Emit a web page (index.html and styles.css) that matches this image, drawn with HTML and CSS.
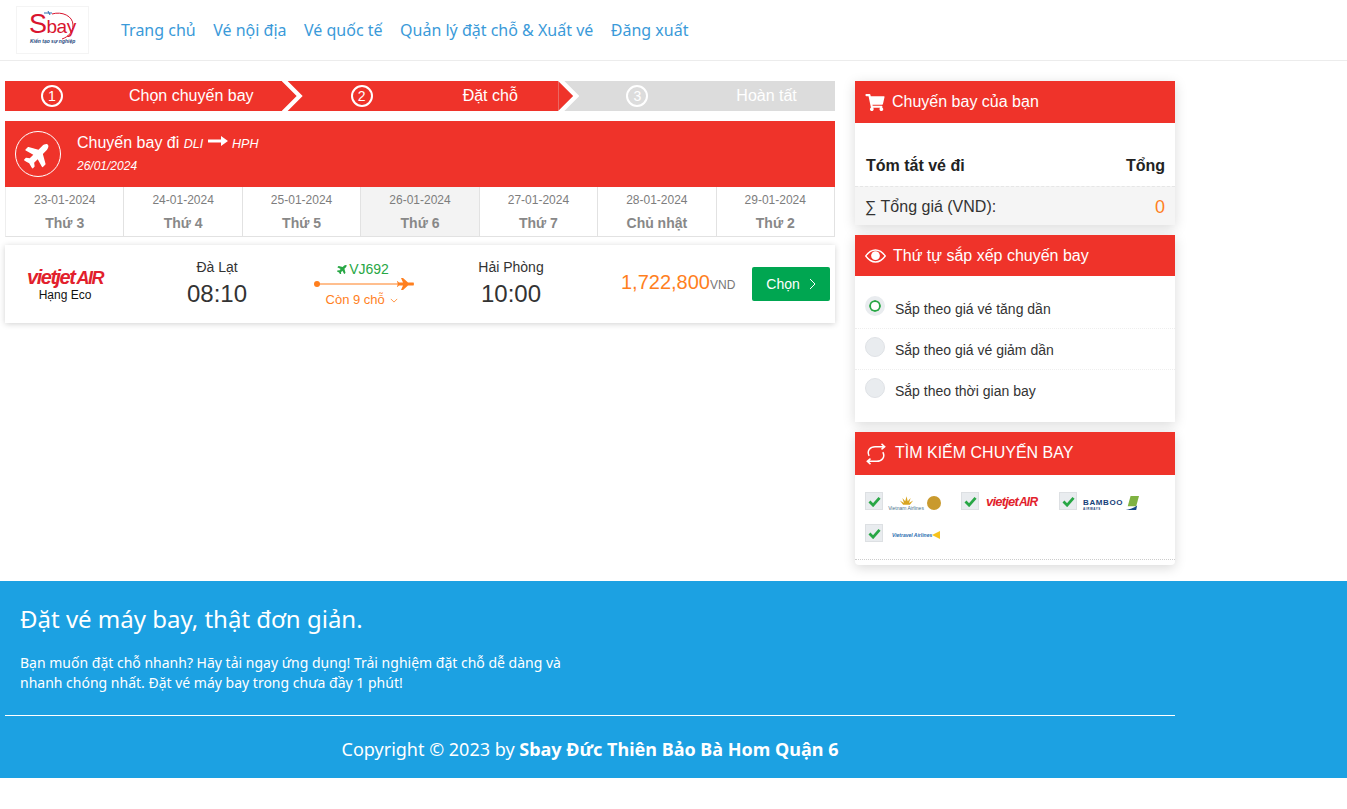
FILE: index.html
```html
<!DOCTYPE html>
<html lang="vi">
<head>
  <meta charset="UTF-8">
  <meta name="viewport" content="width=device-width, initial-scale=1.0">
  <title>Sbay - Đặt vé máy bay</title>
  <link rel="stylesheet" href="styles.css">
</head>
<body>
  <!-- Thanh menu -->
  <header class="topbar">
    <a class="logo" href="#">
      <span class="logo-word"><span class="logo-s">S</span>bay</span>
      <svg class="logo-arc" viewBox="0 0 36 30"><path d="M14 4 C24 1 35 6 35 15 C35 22 30 27 24 29" fill="none" stroke="#d9152f" stroke-width="1"/><path d="M6 3h8M10 1l2 4" stroke="#2a6db0" stroke-width="1" fill="none"/></svg>
      <span class="logo-slogan">Kiến tạo sự nghiệp</span>
    </a>
    <nav class="menu">
      <a href="#">Trang chủ</a>
      <a href="#">Vé nội địa</a>
      <a href="#">Vé quốc tế</a>
      <a href="#">Quản lý đặt chỗ &amp; Xuất vé</a>
      <a href="#">Đăng xuất</a>
    </nav>
  </header>

  <main class="content">
    <section class="col-left">
      <!-- Các bước -->
      <div class="steps">
        <div class="step step-one"><span class="step-num">1</span><span class="step-text">Chọn chuyến bay</span></div>
        <div class="step step-two"><span class="step-num">2</span><span class="step-text">Đặt chỗ</span></div>
        <div class="step step-three"><span class="step-num">3</span><span class="step-text">Hoàn tất</span></div>
      </div>

      <div class="route-bar">
        <span class="route-icon">
          <svg class="icon-plane" viewBox="0 0 576 512"><path fill="#fff" d="M480 192H365.71L260.61 8.06A16.014 16.014 0 0 0 246.71 0h-65.5c-10.63 0-18.3 10.17-15.38 20.39L214.86 192H112l-43.2-57.6c-3.02-4.03-7.77-6.4-12.8-6.4H16.01C5.6 128-2.04 137.78.49 147.88L32 256 .49 364.12C-2.04 374.22 5.6 384 16.01 384H56c5.04 0 9.78-2.37 12.8-6.4L112 320h102.86l-49.03 171.6c-2.92 10.22 4.75 20.4 15.38 20.4h65.5c5.74 0 11.04-3.08 13.89-8.06L365.71 320H480c35.35 0 96-28.65 96-64s-60.65-64-96-64z"/></svg>
        </span>
        <div class="route-info">
          <div class="route-title">Chuyến bay đi <em>DLI</em>
            <svg class="icon-arrow" viewBox="0 0 20 10"><path fill="#fff" d="M0 3.6h13V0l7 5-7 5V6.4H0z"/></svg>
            <em>HPH</em></div>
          <div class="route-date">26/01/2024</div>
        </div>
      </div>

      <!-- Chọn ngày -->
      <div class="dates">
        <div class="date-cell"><span class="date-day">23-01-2024</span><b>Thứ 3</b></div>
        <div class="date-cell"><span class="date-day">24-01-2024</span><b>Thứ 4</b></div>
        <div class="date-cell"><span class="date-day">25-01-2024</span><b>Thứ 5</b></div>
        <div class="date-cell active"><span class="date-day">26-01-2024</span><b>Thứ 6</b></div>
        <div class="date-cell"><span class="date-day">27-01-2024</span><b>Thứ 7</b></div>
        <div class="date-cell"><span class="date-day">28-01-2024</span><b>Chủ nhật</b></div>
        <div class="date-cell"><span class="date-day">29-01-2024</span><b>Thứ 2</b></div>
      </div>

      <!-- Chuyến bay -->
      <div class="flight">
        <div class="flight-airline">
          <span class="vj-logo">vietjet<i>AIR</i></span>
          <span class="flight-class">Hạng Eco</span>
        </div>
        <div class="flight-point"><span class="city">Đà Lạt</span><span class="time">08:10</span></div>
        <div class="flight-mid">
          <span class="flight-no">
            <svg class="icon-mini" viewBox="0 0 576 512"><path fill="#28a745" transform="rotate(-45 288 256)" d="M480 192H365.71L260.61 8.06A16.014 16.014 0 0 0 246.71 0h-65.5c-10.63 0-18.3 10.17-15.38 20.39L214.86 192H112l-43.2-57.6c-3.02-4.03-7.77-6.4-12.8-6.4H16.01C5.6 128-2.04 137.78.49 147.88L32 256 .49 364.12C-2.04 374.22 5.6 384 16.01 384H56c5.04 0 9.78-2.37 12.8-6.4L112 320h102.86l-49.03 171.6c-2.92 10.22 4.75 20.4 15.38 20.4h65.5c5.74 0 11.04-3.08 13.89-8.06L365.71 320H480c35.35 0 96-28.65 96-64s-60.65-64-96-64z"/></svg>VJ692</span>
          <svg class="flight-line" viewBox="0 0 100 12"><circle cx="3" cy="6" r="3" fill="#ff7f1e"/><path d="M3 6h96" stroke="#ff7f1e" stroke-width="1"/><path fill="#ff7f1e" d="M87 0h2l5 4.6h5.6L100 6l-.4 1.4H94L89 12h-2l2-4.6h-4l-1.600 1.600H83l.8-3-.8-3h.4L85 4.600h4z"/></svg>
          <span class="seats">Còn 9 chỗ
            <svg class="icon-down" viewBox="0 0 10 6"><path d="M1 1l4 4 4-4" fill="none" stroke="#ff7f1e" stroke-width="1"/></svg></span>
        </div>
        <div class="flight-point"><span class="city">Hải Phòng</span><span class="time">10:00</span></div>
        <div class="flight-price">1,722,800<small>VND</small></div>
        <a class="btn-choose" href="#">Chọn
          <svg class="icon-right" viewBox="0 0 7 12"><path d="M1 1l5 5-5 5" fill="none" stroke="#fff" stroke-width="1"/></svg></a>
      </div>
    </section>

    <aside class="col-right">
      <div class="panel">
        <div class="panel-head head-cart">
          <svg class="icon-cart" viewBox="0 0 576 512"><path fill="#fff" d="M528.12 301.319l47.273-208C578.806 78.301 567.391 64 551.99 64H159.208l-9.166-44.81C147.758 8.021 137.93 0 126.529 0H24C10.745 0 0 10.745 0 24v16c0 13.255 10.745 24 24 24h69.883l70.248 343.435C147.325 417.1 136 435.222 136 456c0 30.928 25.072 56 56 56s56-25.072 56-56c0-15.674-6.447-29.835-16.824-40h209.647C430.447 426.165 424 440.326 424 456c0 30.928 25.072 56 56 56s56-25.072 56-56c0-22.172-12.888-41.332-31.579-50.405l5.517-24.276c3.413-15.018-8.002-29.319-23.403-29.319H218.117l-6.545-32h293.145c11.206 0 20.92-7.754 23.403-18.681z"/></svg>
          Chuyến bay của bạn
        </div>
        <div class="summary-head"><span>Tóm tắt vé đi</span><span>Tổng</span></div>
        <div class="summary-total"><span>∑ Tổng giá (VND):</span><span class="total-num">0</span></div>
      </div>

      <div class="panel">
        <div class="panel-head">
          <svg class="icon-eye" viewBox="0 0 28 18"><path d="M1 9C5 3.500 9 1 14 1s9 2.500 13 8c-4 5.500-8 8-13 8S5 14.500 1 9z" fill="none" stroke="#fff" stroke-width="1.800"/><circle cx="14" cy="8.500" r="5.800" fill="#fff"/></svg>
          Thứ tự sắp xếp chuyến bay
        </div>
        <div class="sort-list">
          <div class="sort-item"><span class="radio checked"></span>Sắp theo giá vé tăng dần</div>
          <div class="sort-item"><span class="radio"></span>Sắp theo giá vé giảm dần</div>
          <div class="sort-item"><span class="radio"></span>Sắp theo thời gian bay</div>
        </div>
      </div>

      <div class="panel panel-search">
        <div class="panel-head head-search">
          <svg class="icon-refresh" viewBox="0 0 24 24"><path d="M4.500 14C1.500 8 6 4 11 4h10M18 1l3.500 3-3.500 3M19.500 10c3 6-1.500 10-6.500 10H3M6 17l-3.500 3L6 23" fill="none" stroke="#fff" stroke-width="1.600"/></svg>
          TÌM KIẾM CHUYẾN BAY
        </div>
        <div class="airlines">
          <label class="airline al-vn">
            <span class="check"><svg viewBox="0 0 14 12"><path d="M1.500 6l4 4 7-8" fill="none" stroke="#28a745" stroke-width="3"/></svg></span>
            <span class="vn-logo"><svg viewBox="0 0 18 10"><path fill="#d9a521" d="M9 0l1.500 6L14 2l-2 6 5-3-4 5H5L1 5l5 3-2-6 3.500 4z"/></svg><small>Vietnam Airlines</small></span>
            <span class="vn-badge"></span>
          </label>
          <label class="airline al-vj">
            <span class="check"><svg viewBox="0 0 14 12"><path d="M1.500 6l4 4 7-8" fill="none" stroke="#28a745" stroke-width="3"/></svg></span>
            <span class="vj-logo vj-small">vietjet<i>AIR</i></span>
          </label>
          <label class="airline al-bb">
            <span class="check"><svg viewBox="0 0 14 12"><path d="M1.500 6l4 4 7-8" fill="none" stroke="#28a745" stroke-width="3"/></svg></span>
            <span class="bb-logo">BAMBOO<small>AIRWAYS</small></span>
            <svg class="bb-tail" viewBox="0 0 18 16"><path fill="#7fb241" d="M8 0h9l-3 11H5z"/><path fill="#164a86" d="M0 15c6 0 11-2 15-5l-1 5z"/></svg>
          </label>
          <label class="airline al-vs">
            <span class="check"><svg viewBox="0 0 14 12"><path d="M1.500 6l4 4 7-8" fill="none" stroke="#28a745" stroke-width="3"/></svg></span>
            <span class="vs-logo">Vietravel Airlines</span>
            <svg class="vs-tail" viewBox="0 0 8 8"><path fill="#f7c31c" d="M8 0v8L0 4z"/></svg>
          </label>
        </div>
      </div>
    </aside>
  </main>

  <footer class="footer">
    <h2>Đặt vé máy bay, thật đơn giản.</h2>
    <p>Bạn muốn đặt chỗ nhanh? Hãy tải ngay ứng dụng! Trải nghiệm đặt chỗ dễ dàng và nhanh chóng nhất. Đặt vé máy bay trong chưa đầy 1 phút!</p>
    <div class="copyright">Copyright © 2023 by <b>Sbay Đức Thiên Bảo Bà Hom Quận 6</b></div>
  </footer>
</body>
</html>
```

FILE: styles.css
```css
/* Cơ bản */
body {
  margin: 0;
  font-family: "Liberation Sans", Arial, sans-serif;
  color: #333;
  background-color: #fff;
}
a {
  text-decoration: none;
}

/* Thanh menu */
.topbar {
  display: flex;
  align-items: center;
  height: 60px;
  padding-left: 16px;
  border-bottom: 1px solid #ececec;
}
.logo {
  position: relative;
  display: block;
  box-sizing: border-box;
  width: 73px;
  height: 48px;
  border: 1px solid #f4f4f4;
}
.logo-word {
  position: absolute;
  left: 12px;
  top: 3px;
  font-size: 19px;
  letter-spacing: -0.5px;
  line-height: 28px;
  color: #d9152f;
}
.logo-s {
  font-size: 27px;
}
.logo-arc {
  position: absolute;
  left: 21px;
  top: 3px;
  width: 36px;
  height: 30px;
}
.logo-slogan {
  position: absolute;
  left: 13px;
  top: 31px;
  font-size: 5px;
  line-height: 7px;
  font-style: italic;
  font-weight: bold;
  color: #25477d;
  white-space: nowrap;
}
.menu {
  display: flex;
  gap: 17.500px;
  margin-left: 32px;
  font-family: "Noto Sans", sans-serif;
  font-size: 16px;
}
.menu a {
  color: #3a9ad9;
}

/* Bố cục chính */
.content {
  display: flex;
  gap: 20px;
  width: 1170px;
  padding: 20px 0 16px 5px;
}
.col-left {
  width: 830px;
}
.col-right {
  display: flex;
  flex-direction: column;
  gap: 10px;
  width: 320px;
}

/* Các bước */
.steps {
  display: grid;
  grid-template-columns: repeat(3, 1fr);
  height: 30px;
  margin-bottom: 10px;
}
.step {
  position: relative;
  display: flex;
  align-items: center;
  color: #fff;
  font-size: 16px;
  background-color: #ef332a;
}
.step-three {
  background-color: #dcdcdc;
}
/* mũi tên trắng giữa các bước */
.step-one::after,
.step-two::after {
  content: "";
  position: absolute;
  left: 100%;
  top: 0;
  z-index: 2;
  width: 21px;
  height: 30px;
  background-color: #fff;
  clip-path: polygon(0 0, 6px 0, 21px 15px, 6px 30px, 0 30px, 15px 15px);
}
.step-two::before {
  content: "";
  position: absolute;
  left: 100%;
  top: 0;
  z-index: 1;
  width: 15px;
  height: 30px;
  background-color: #ef332a;
  clip-path: polygon(0 0, 15px 15px, 0 30px);
}
.step-num {
  box-sizing: border-box;
  width: 22px;
  height: 22px;
  border: 2px solid #fff;
  border-radius: 50%;
  font-size: 14px;
  line-height: 18px;
  text-align: center;
}
.step-one .step-num { margin-left: 36px; }
.step-one .step-text { margin-left: 66px; }
.step-two .step-num { margin-left: 69px; }
.step-two .step-text { margin-left: 90px; }
.step-three .step-num { margin-left: 68px; }
.step-three .step-text { margin-left: 88px; }

/* Thanh tuyến bay */
.route-bar {
  display: flex;
  align-items: center;
  gap: 16px;
  height: 66px;
  padding-left: 10px;
  color: #fff;
  background-color: #ef332a;
}
.route-icon {
  display: flex;
  align-items: center;
  justify-content: center;
  box-sizing: border-box;
  width: 46px;
  height: 46px;
  border: 1px solid #fff;
  border-radius: 50%;
}
.icon-plane {
  width: 28px;
  height: 25px;
  transform: rotate(-45deg);
}
.route-info {
  margin-top: -2px;
}
.route-title {
  font-size: 16px;
  line-height: 20px;
}
.route-title em {
  font-size: 12.500px;
}
.icon-arrow {
  width: 20px;
  height: 10px;
  margin: 0 0 2px 0;
}
.route-date {
  margin-top: 4px;
  font-size: 12px;
  line-height: 16px;
  font-style: italic;
}

/* Chọn ngày */
.dates {
  display: grid;
  grid-template-columns: repeat(7, 1fr);
  height: 50px;
  box-sizing: border-box;
  border-bottom: 1px solid #e2e2e2;
  border-left: 1px solid #eee;
}
.date-cell {
  display: flex;
  flex-direction: column;
  align-items: center;
  border-right: 1px solid #e2e2e2;
  color: #7d7d7d;
}
.date-cell.active {
  background-color: #f3f3f3;
}
.date-day {
  margin-top: 5px;
  font-size: 12px;
  line-height: 16px;
}
.date-cell b {
  margin-top: 7px;
  font-size: 14px;
  line-height: 16px;
  color: #888;
}

/* Chuyến bay */
.flight {
  display: grid;
  grid-template-columns: 120px 184px 110px 184px 1fr auto;
  align-items: center;
  height: 78px;
  margin-top: 8px;
  padding-right: 5px;
  box-sizing: border-box;
  box-shadow: 0 1px 6px rgba(0,0,0,0.18);
}
.flight-airline {
  display: flex;
  flex-direction: column;
  align-items: center;
}
.vj-logo {
  font-size: 20px;
  line-height: 22px;
  font-weight: bold;
  font-style: italic;
  letter-spacing: -1.500px;
  color: #e21f2d;
}
.vj-logo i {
  margin-left: 2px;
  font-size: 18px;
}
.flight-class {
  margin-top: -1px;
  font-size: 12px;
  line-height: 14px;
  color: #111;
}
.flight-point {
  display: flex;
  flex-direction: column;
  align-items: center;
  padding-bottom: 1px;
}
.city {
  font-size: 14px;
  line-height: 16px;
}
.time {
  margin-top: 4px;
  font-size: 24px;
  line-height: 30px;
}
.flight-mid {
  display: flex;
  flex-direction: column;
  align-items: center;
}
.flight-no {
  margin-left: -2px;
  padding-top: 1px;
  font-size: 14px;
  line-height: 18px;
  color: #28a745;
}
.icon-mini {
  width: 11px;
  height: 10px;
  margin-right: 1px;
}
.flight-line {
  display: block;
  width: 100px;
  height: 12px;
}
.seats {
  margin: 1px 0 0 -4px;
  font-size: 13px;
  line-height: 18px;
  color: #ff7f1e;
}
.icon-down {
  width: 8px;
  height: 5px;
  margin: 0 0 1px 2px;
}
.flight-price {
  margin-top: -4px;
  padding-left: 18px;
  font-size: 20px;
  color: #ff7f1e;
}
.flight-price small {
  font-size: 12px;
  color: #777;
}
.btn-choose {
  display: flex;
  align-items: center;
  justify-content: center;
  gap: 9px;
  width: 78px;
  height: 34px;
  border-radius: 2px;
  font-size: 14px;
  color: #fff;
  background-color: #00a651;
}
.icon-right {
  width: 7px;
  height: 12px;
}

/* Cột phải */
.panel {
  box-shadow: 0 3px 12px rgba(0,0,0,0.15);
  background-color: #fff;
}
.panel-head {
  display: flex;
  align-items: center;
  gap: 7px;
  height: 41px;
  padding-left: 10px;
  font-size: 16px;
  color: #fff;
  background-color: #ef332a;
}
.head-cart {
  height: 42px;
}
.icon-cart {
  width: 20px;
  height: 17px;
}
.icon-eye {
  width: 21px;
  height: 14px;
}
.summary-head {
  display: flex;
  justify-content: space-between;
  padding: 33px 10px 10px 11px;
  font-size: 16px;
  line-height: 20px;
  font-weight: bold;
  color: #222;
}
.summary-total {
  display: flex;
  justify-content: space-between;
  padding: 10px 10px 8px;
  border-top: 1px dashed #e6e6e6;
  font-size: 16px;
  line-height: 20px;
  background-color: #f5f5f5;
}
.total-num {
  font-size: 18px;
  color: #ff7f1e;
}

.sort-list {
  padding: 12px 0 11px;
}
.sort-item {
  display: flex;
  align-items: center;
  gap: 10px;
  box-sizing: border-box;
  height: 41px;
  padding: 2px 0 0 10px;
  font-size: 14px;
  border-bottom: 1px dotted #eee;
}
.sort-item:last-child {
  border-bottom-color: transparent;
}
.radio {
  box-sizing: border-box;
  width: 20px;
  height: 20px;
  margin-top: -6px;
  border: 1px solid #dfe2e6;
  border-radius: 50%;
  background-color: #e9ecef;
}
.radio.checked {
  border: 4px solid #e9ecef;
  box-shadow: inset 0 0 0 2px #28a745;
  background-color: #fff;
}

.head-search {
  box-sizing: border-box;
  gap: 8px;
  height: 43px;
  padding-bottom: 2px;
}
.icon-refresh {
  width: 22px;
  height: 24px;
  margin-top: 2px;
}
.panel-search {
  border-radius: 0 0 4px 4px;
}
.airlines {
  display: flex;
  flex-wrap: wrap;
  align-content: flex-start;
  box-sizing: border-box;
  height: 85px;
  padding: 17px 0 0 10px;
  border-bottom: 1px dotted #ccc;
  margin-bottom: 5px;
}
.airline {
  display: flex;
  align-items: flex-start;
  height: 32px;
}
.al-vn { width: 96px; }
.al-vj { width: 98px; }
.al-bb { width: 96px; }
.al-vs { width: 100%; }
.check {
  display: flex;
  align-items: center;
  justify-content: center;
  box-sizing: border-box;
  width: 18px;
  height: 18px;
  border: 1px solid #dde0e3;
  background-color: #e9ecef;
}
.check svg {
  width: 13px;
  height: 11px;
}
.vn-logo {
  display: flex;
  flex-direction: column;
  align-items: center;
  width: 34px;
  margin: 4px 0 0 6px;
}
.vn-logo svg {
  width: 15px;
  height: 9px;
}
.vn-logo small {
  font-size: 5px;
  line-height: 6px;
  white-space: nowrap;
  color: #49718c;
}
.vn-badge {
  width: 14px;
  height: 14px;
  margin: 4px 0 0 4px;
  border-radius: 50%;
  background-color: #c99a2e;
}
.vj-small {
  margin: 1px 0 0 7px;
  font-size: 13px;
  line-height: 18px;
  letter-spacing: -0.800px;
}
.vj-small i {
  margin-left: 1px;
  font-size: 12px;
}
.bb-logo {
  display: flex;
  flex-direction: column;
  margin: 7px 0 0 6px;
  font-size: 8px;
  line-height: 8px;
  letter-spacing: 0.600px;
  font-weight: bold;
  color: #17427a;
}
.bb-logo small {
  font-size: 3px;
  line-height: 4px;
}
.bb-tail {
  width: 17px;
  height: 15px;
  margin: 4px 0 0 0;
}
.vs-logo {
  margin: 7px 0 0 9px;
  font-size: 5px;
  line-height: 8px;
  font-weight: bold;
  font-style: italic;
  color: #2a6db0;
}
.vs-tail {
  width: 8px;
  height: 8px;
  margin-top: 7px;
}

/* Chân trang */
.footer {
  box-sizing: border-box;
  height: 197px;
  padding-top: 21px;
  font-family: "Noto Sans", sans-serif;
  color: #fff;
  background-color: #1ca1e2;
}
.footer h2 {
  margin: 0 0 0 20px;
  font-size: 24px;
  line-height: 34px;
  font-weight: normal;
}
.footer p {
  width: 560px;
  margin: 17px 0 0 20px;
  font-size: 14px;
  line-height: 20px;
}
.copyright {
  width: 1170px;
  margin: 22px 0 0 5px;
  padding-top: 19px;
  border-top: 1px solid #fff;
  font-size: 18px;
  line-height: 28px;
  text-align: center;
}
```
